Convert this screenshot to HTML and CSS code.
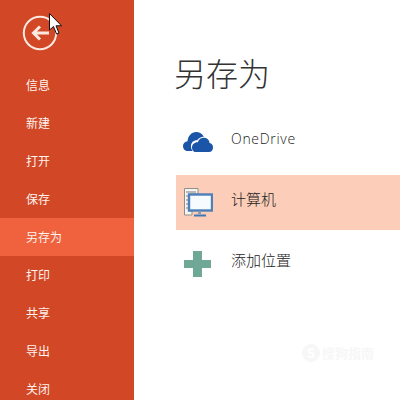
FILE: index.html
```html
<!DOCTYPE html>
<html lang="zh">
<head>
<meta charset="utf-8">
<title>另存为</title>
<link rel="stylesheet" href="styles.css">
</head>
<body>
<div class="app">
  <nav class="side">
    <div class="back">
      <svg width="36" height="36" viewBox="0 0 36 36"><circle cx="18" cy="18" r="16.2" fill="none" stroke="#fbe9e2" stroke-width="2"/><path d="M11 18H27M18 11.500L11.500 18L18 24.500" fill="none" stroke="#fbe9e2" stroke-width="3"/></svg>
    </div>
    <div class="item">信息</div>
    <div class="item">新建</div>
    <div class="item">打开</div>
    <div class="item">保存</div>
    <div class="item active">另存为</div>
    <div class="item">打印</div>
    <div class="item">共享</div>
    <div class="item">导出</div>
    <div class="item">关闭</div>
  </nav>
  <main class="main">
    <h1 class="title">另存为</h1>
    <div class="places">
      <div class="place">
        <svg class="icon" width="30" height="22" viewBox="0 0 30 22"><path d="M5 20C2 20 0 18 0 15C0 12.500 2 10.500 4.500 10.300C5 5 8.500 1 13 1C16.500 1 19.500 3 20.800 5.800C18 5.800 15.600 7 14.200 9.300C11 9 8 11.500 8 15C8 17 8.500 18.500 9.500 20Z" fill="#1b55a8"/><path d="M12.500 21C10 21 9 18.500 9 16.500C9 13.500 11.500 11 14.800 11.200C15.800 8.200 18.200 6.800 20.800 6.800C24 6.800 26.300 9 26.500 12C28.800 12.300 30 14.200 30 16.500C30 19 28.500 21 26 21Z" fill="#1b55a8"/></svg>
        <span class="label latin">OneDrive</span>
      </div>
      <div class="place selected">
        <svg class="icon" width="30" height="31" viewBox="0 0 30 31"><path d="M1.500 1.500H15V7H6V24H9V28H1.500Z" fill="#faf4ee" stroke="#8d8f8c"/><path d="M3 5H13M3 9H5M3 13H5M3 17H5M3 21H5" stroke="#7d7f7c" fill="none"/><rect x="6" y="7.500" width="23" height="16" fill="#f8fbfe" stroke="#4d80b8" stroke-width="2.400"/><path d="M16.500 24V27" stroke="#8d9aa8" stroke-width="3"/><path d="M11 28.500H23" stroke="#3f77b5" stroke-width="2"/></svg>
        <span class="label">计算机</span>
      </div>
      <div class="place">
        <svg class="icon" width="30" height="26" viewBox="0 0 30 26"><path d="M10 0H19V9H28V17H19V26H10V17H1V9H10Z" fill="#70a897"/></svg>
        <span class="label">添加位置</span>
      </div>
    </div>
  </main>
</div>
<svg class="cursor" width="14" height="23" viewBox="0 0 14 23"><path d="M0.500 0.500V17L4.500 13.500L7.500 21L10 20L7 12.800H12.500Z" fill="#fff" stroke="#111"/></svg>
<div class="mark"><span class="mark-s">S</span><span class="mark-text">搜狗指南</span></div>
</body>
</html>
```
FILE: styles.css
```css
html, body {
  margin: 0;
  padding: 0;
  width: 400px;
  height: 400px;
  overflow: hidden;
  background: #fff;
}
body {
  position: relative;
  font-family: "Noto Sans CJK SC", "Liberation Sans", sans-serif;
}
.app {
  display: flex;
  height: 400px;
}
.side {
  width: 134px;
  flex: none;
  background: #d24726;
  display: flex;
  flex-direction: column;
  overflow: hidden;
}
.back {
  flex: none;
  height: 66px;
  padding-left: 22px;
  padding-top: 15px;
  box-sizing: border-box;
}
.back svg { display: block; }
.item {
  flex: none;
  height: 38px;
  line-height: 37px;
  padding-left: 26px;
  font-size: 12px;
  font-weight: 400;
  color: #fdf3ee;
}
.active { background: #f0623e; }
.main {
  flex: 1;
  padding: 48px 0 0 42px;
}
.title {
  margin: 0 0 0 -2px;
  height: 66px;
  line-height: 48px;
  font-size: 32px;
  font-weight: 300;
  color: #333;
}
.places {
  display: flex;
  flex-direction: column;
  gap: 6px;
}
.place {
  height: 55px;
  display: flex;
  align-items: center;
  padding-left: 7px;
  font-size: 15px;
  font-weight: 300;
  color: #222;
}
.selected { background: #fccdb8; }
.icon {
  flex: none;
  margin-right: 18px;
}
.label {
  line-height: 20px;
  margin-bottom: 7px;
}
.latin {
  font-family: "Open Sans", "Liberation Sans", sans-serif;
  font-size: 14px;
  font-weight: 300;
  color: #222;
  letter-spacing: 0.7px;
  margin-bottom: 5px;
}
.cursor {
  position: absolute;
  left: 49px;
  top: 13px;
}
.mark {
  position: absolute;
  left: 302px;
  top: 343px;
  display: flex;
  align-items: center;
  gap: 2px;
  color: #f7f7f7;
  font-size: 13px;
  font-weight: 700;
}
.mark-s {
  width: 18px;
  height: 18px;
  line-height: 18px;
  text-align: center;
  border-radius: 50%;
  background: #f7f7f7;
  color: #fff;
  font-size: 13px;
}
```
